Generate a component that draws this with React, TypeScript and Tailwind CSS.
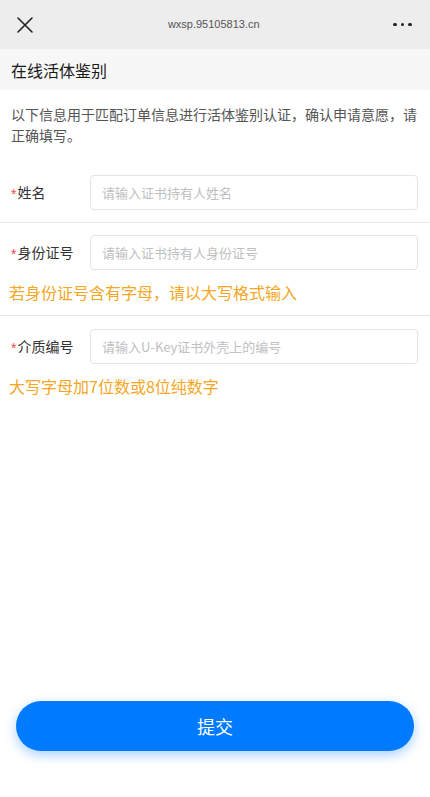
import React from "react";

const font = { fontFamily: '"Noto Sans CJK SC", "Noto Sans", sans-serif' };

function Label({ text }: { text: string }) {
  return (
    <div className="w-[90px] flex items-center pl-[11px] text-[14px] text-[#333]">
      <span className="relative top-[1px] text-[14px] leading-none text-[#f04a44] mr-[1px]" style={{ fontFamily: '"Liberation Sans", Arial, sans-serif' }}>*</span>
      <span>{text}</span>
    </div>
  );
}

function Input({ placeholder }: { placeholder: string }) {
  return (
    <div className="flex-1 mr-[12px] h-[35px] rounded-[4px] border border-[#e4e4e4] flex items-center pl-[11px] text-[13px] text-[#c0c0c0]">
      {placeholder}
    </div>
  );
}

export default function App() {
  return (
    <div className="min-h-screen h-[797px] w-full bg-white flex flex-col" style={font}>
      <div className="h-[49px] bg-[#ededed] flex items-center justify-between px-[16px]">
        <svg width="18" height="18" viewBox="0 0 18 18">
          <path d="M2 2 L16 16 M16 2 L2 16" stroke="#222" strokeWidth="1.6" strokeLinecap="round" />
        </svg>
        <div className="text-[11px] text-[#555]" style={{ fontFamily: '"Liberation Sans", Arial, sans-serif' }}>
          wxsp.95105813.cn
        </div>
        <div className="flex items-center gap-[4px] pr-[2px]">
          <span className="w-[3.5px] h-[3.5px] rounded-full bg-[#222]" />
          <span className="w-[3.5px] h-[3.5px] rounded-full bg-[#222]" />
          <span className="w-[3.5px] h-[3.5px] rounded-full bg-[#222]" />
        </div>
      </div>
      <div className="h-[41px] bg-[#f7f7f7] flex items-center pl-[11px] text-[16px] text-[#1a1a1a]">
        在线活体鉴别
      </div>
      <div className="pt-[14px] pb-[17px] px-[11px] text-[14px] leading-[21px] text-[#555]">
        以下信息用于匹配订单信息进行活体鉴别认证，确认申请意愿，请正确填写。
      </div>
      <div className="border-b border-[#e8e8e8] py-[12px]">
        <div className="flex items-center">
          <Label text="姓名" />
          <Input placeholder="请输入证书持有人姓名" />
        </div>
      </div>
      <div className="border-b border-[#e8e8e8] pt-[12px] pb-[11px]">
        <div className="flex items-center">
          <Label text="身份证号" />
          <Input placeholder="请输入证书持有人身份证号" />
        </div>
        <div className="mt-[10px] pl-[9px] text-[16px] leading-[24px] text-[#f5a623]">若身份证号含有字母，请以大写格式输入</div>
      </div>
      <div className="pt-[13px]">
        <div className="flex items-center">
          <Label text="介质编号" />
          <Input placeholder="请输入U-Key证书外壳上的编号" />
        </div>
        <div className="mt-[10px] pl-[9px] text-[16px] leading-[24px] text-[#f5a623]">大写字母加7位数或8位纯数字</div>
      </div>
      <div className="flex-1" />
      <div className="px-[16px] pb-[46px]">
        <div className="h-[50px] rounded-full bg-[#007aff] flex items-center justify-center text-white text-[18px] shadow-[0_4px_12px_rgba(0,122,255,0.35)]">
          提交
        </div>
      </div>
    </div>
  );
}
